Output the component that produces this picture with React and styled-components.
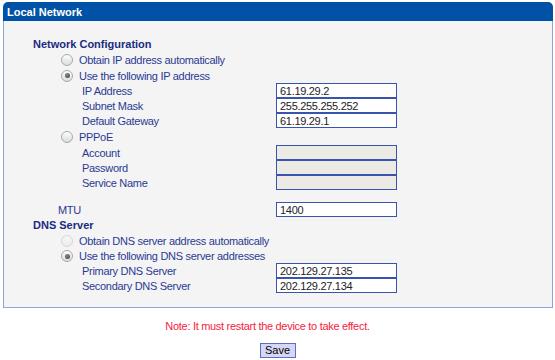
import React from 'react';
import styled, { createGlobalStyle } from 'styled-components';

const GlobalStyle = createGlobalStyle`
	body {
		margin: 0;
		background: #ffffff;
		font-family: "Liberation Sans", Arial, sans-serif;
	}
`;

const Panel = styled.div`
	width: 550px;
	margin: 2px 0 0 3px;
`;

const PanelHeader = styled.div`
	height: 19px;
	line-height: 20px;
	padding-left: 4px;
	background: #0052a6;
	border-radius: 5px 5px 0 0;
	color: #ffffff;
	font-size: 11px;
	font-weight: bold;
`;

const PanelBody = styled.div`
	border: 1px solid #8ba6dd;
	border-top: 0;
	background: #f4f4f4;
	padding: 15px 0 14px 0;
`;

const Row = styled.div`
	display: flex;
	align-items: center;
	height: ${props => props.h || 15}px;
`;

const Heading = styled.div`
	padding-left: 29px;
	color: #1b2b80;
	font-size: 11px;
	font-weight: bold;
`;

const RadioLabel = styled.label`
	display: flex;
	align-items: center;
	gap: 6px;
	padding-left: 57px;
	color: #2a3a92;
	font-size: 11px;
	letter-spacing: -0.3px;
`;

const Radio = styled.span`
	position: relative;
	box-sizing: border-box;
	width: 12px;
	height: 12px;
	border-radius: 50%;
	border: 1px solid ${props => props.disabled ? '#d6d6d6' : '#a9a9a9'};
	background: ${props => props.disabled
		? 'linear-gradient(#f6f6f6, #ececec)'
		: 'linear-gradient(#fdfdfd, #dcdcdc)'};

	&::after {
		content: '';
		display: ${props => props.checked ? 'block' : 'none'};
		position: absolute;
		left: 2.5px;
		top: 2.5px;
		width: 5px;
		height: 5px;
		border-radius: 50%;
		background: radial-gradient(circle at 40% 35%, #8a8a8a, #3c3c3c);
	}
`;

const FieldLabel = styled.div`
	box-sizing: border-box;
	width: 272px;
	padding-left: ${props => props.indent || 78}px;
	color: #2a3a92;
	font-size: 11px;
	letter-spacing: -0.3px;
`;

const Input = styled.input`
	box-sizing: border-box;
	width: 121px;
	height: 15px;
	margin: 0;
	padding: 0 3px;
	border: 1px solid #3854ae;
	background: ${props => props.disabled ? '#ebeae4' : '#ffffff'};
	color: #222222;
	font-family: "Liberation Sans", Arial, sans-serif;
	font-size: 11px;
	letter-spacing: -0.3px;
	outline: none;
`;

const Spacer = styled.div`
	height: ${props => props.h}px;
`;

const Footer = styled.div`
	display: flex;
	flex-direction: column;
	align-items: center;
	padding-top: 8px;
`;

const Note = styled.div`
	margin-right: 20px;
	line-height: 20px;
	color: #f5233f;
	font-size: 11px;
	letter-spacing: -0.3px;
`;

const SaveButton = styled.button`
	box-sizing: border-box;
	width: 36px;
	height: 15px;
	margin-top: 7px;
	padding: 0;
	border: 1px solid #5a6fc8;
	background: #d6d6f5;
	color: #000000;
	font-family: "Liberation Sans", Arial, sans-serif;
	font-size: 11px;
	line-height: 13px;
`;

const RadioRow = ({ h, checked, disabled, children }) => (
	<Row h={h}>
		<RadioLabel>
			<Radio checked={checked} disabled={disabled} />
			{children}
		</RadioLabel>
	</Row>
);

const Field = ({ label, value, disabled, indent }) => (
	<Row h={15}>
		<FieldLabel indent={indent}>{label}</FieldLabel>
		<Input defaultValue={value} disabled={disabled} />
	</Row>
);

export default function App() {
	return (
		<>
			<GlobalStyle />
			<Panel>
				<PanelHeader>Local Network</PanelHeader>
				<PanelBody>
					<Row h={16}><Heading>Network Configuration</Heading></Row>
					<RadioRow h={16}>Obtain IP address automatically</RadioRow>
					<RadioRow h={15} checked>Use the following IP address</RadioRow>
					<Field label="IP Address" value="61.19.29.2" />
					<Field label="Subnet Mask" value="255.255.255.252" />
					<Field label="Default Gateway" value="61.19.29.1" />
					<RadioRow h={17}>PPPoE</RadioRow>
					<Field label="Account" value="" disabled />
					<Field label="Password" value="" disabled />
					<Field label="Service Name" value="" disabled />
					<Spacer h={12} />
					<Field label="MTU" value="1400" indent={54} />
					<Row h={16}><Heading>DNS Server</Heading></Row>
					<RadioRow h={16} disabled>Obtain DNS server address automatically</RadioRow>
					<RadioRow h={14} checked>Use the following DNS server addresses</RadioRow>
					<Field label="Primary DNS Server" value="202.129.27.135" />
					<Field label="Secondary DNS Server" value="202.129.27.134" />
				</PanelBody>
			</Panel>
			<Footer>
				<Note>Note: It must restart the device to take effect.</Note>
				<SaveButton>Save</SaveButton>
			</Footer>
		</>
	);
}
